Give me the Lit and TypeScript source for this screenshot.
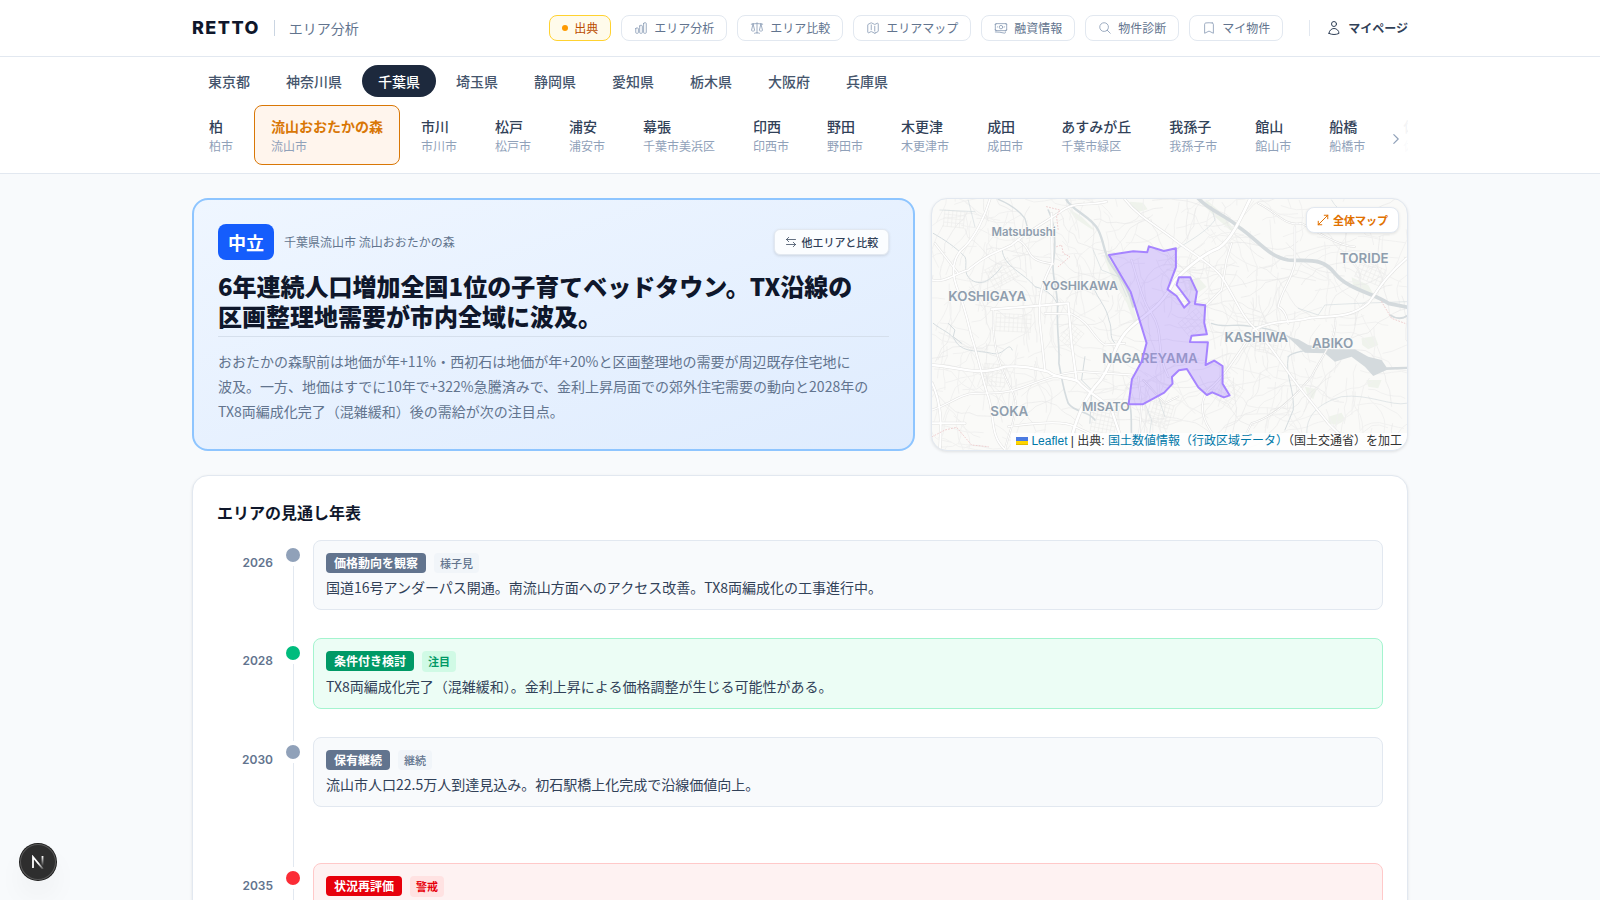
import { LitElement, html, svg, css } from "lit";
import { customElement, state } from "lit/decorators.js";
import { classMap } from "lit/directives/class-map.js";

/* ---------- data ---------- */

const NAV = [
  { label: "エリア分析", icon: "chart" },
  { label: "エリア比較", icon: "scale" },
  { label: "エリアマップ", icon: "map" },
  { label: "融資情報", icon: "banknotes" },
  { label: "物件診断", icon: "search" },
  { label: "マイ物件", icon: "bookmark" },
];

const PREFECTURES = ["東京都", "神奈川県", "千葉県", "埼玉県", "静岡県", "愛知県", "栃木県", "大阪府", "兵庫県"];

const AREAS = [
  ["柏", "柏市"],
  ["流山おおたかの森", "流山市"],
  ["市川", "市川市"],
  ["松戸", "松戸市"],
  ["浦安", "浦安市"],
  ["幕張", "千葉市美浜区"],
  ["印西", "印西市"],
  ["野田", "野田市"],
  ["木更津", "木更津市"],
  ["成田", "成田市"],
  ["あすみが丘", "千葉市緑区"],
  ["我孫子", "我孫子市"],
  ["館山", "館山市"],
  ["船橋", "船橋市"],
  ["佐倉", "佐倉市"],
];

const TIMELINE = [
  { year: "2026", tone: "slate", action: "価格動向を観察", tag: "様子見", text: "国道16号アンダーパス開通。南流山方面へのアクセス改善。TX8両編成化の工事進行中。" },
  { year: "2028", tone: "green", action: "条件付き検討", tag: "注目", text: "TX8両編成化完了（混雑緩和）。金利上昇による価格調整が生じる可能性がある。" },
  { year: "2030", tone: "slate", gap: true, action: "保有継続", tag: "継続", text: "流山市人口22.5万人到達見込み。初石駅橋上化完成で沿線価値向上。" },
  { year: "2035", tone: "red", action: "状況再評価", tag: "警戒", text: "人口ピークアウト後の需給を再確認。" },
];

const ICONS: Record<string, string> = {
  chart:
    "M3 13.125C3 12.504 3.504 12 4.125 12h2.25c.621 0 1.125.504 1.125 1.125v6.75C7.5 20.496 6.996 21 6.375 21h-2.25A1.125 1.125 0 0 1 3 19.875v-6.75ZM9.75 8.625c0-.621.504-1.125 1.125-1.125h2.25c.621 0 1.125.504 1.125 1.125v11.25c0 .621-.504 1.125-1.125 1.125h-2.25a1.125 1.125 0 0 1-1.125-1.125V8.625ZM16.5 4.125c0-.621.504-1.125 1.125-1.125h2.25C20.496 3 21 3.504 21 4.125v15.75c0 .621-.504 1.125-1.125 1.125h-2.25a1.125 1.125 0 0 1-1.125-1.125V4.125Z",
  scale:
    "M12 3v17.25m0 0c-1.472 0-2.882.265-4.185.75M12 20.25c1.472 0 2.882.265 4.185.75M18.75 4.97A48.416 48.416 0 0 0 12 4.5c-2.291 0-4.545.16-6.75.47m13.5 0c1.01.143 2.01.317 3 .52m-3-.52 2.62 10.726c.122.499-.106 1.028-.589 1.202a5.988 5.988 0 0 1-2.031.352 5.988 5.988 0 0 1-2.031-.352c-.483-.174-.711-.703-.59-1.202L18.75 4.971Zm-16.5.52c.99-.203 1.99-.377 3-.52m0 0 2.62 10.726c.122.499-.106 1.028-.589 1.202a5.989 5.989 0 0 1-2.031.352 5.989 5.989 0 0 1-2.031-.352c-.483-.174-.711-.703-.59-1.202L5.25 4.971Z",
  map: "M9 6.75V15m6-6v8.25m.503 3.498 4.875-2.437c.381-.19.622-.58.622-1.006V4.82c0-.836-.88-1.38-1.628-1.006l-3.869 1.934c-.317.159-.69.159-1.006 0L9.503 3.252a1.125 1.125 0 0 0-1.006 0L3.622 5.689C3.24 5.88 3 6.27 3 6.695V19.18c0 .836.88 1.38 1.628 1.006l3.869-1.934c.317-.159.69-.159 1.006 0l4.994 2.497c.317.158.69.158 1.006 0Z",
  banknotes:
    "M2.25 18.75a60.07 60.07 0 0 1 15.797 2.101c.727.198 1.453-.342 1.453-1.096V18.75M3.75 4.5v.75A.75.75 0 0 1 3 6h-.75m0 0v-.375c0-.621.504-1.125 1.125-1.125H20.25M2.25 6v9m18-10.5v.75c0 .414.336.75.75.75h.75m-1.5-1.5h.375c.621 0 1.125.504 1.125 1.125v9.75c0 .621-.504 1.125-1.125 1.125h-.375m1.5-1.5H21a.75.75 0 0 0-.75.75v.75m0 0H3.75m0 0h-.375a1.125 1.125 0 0 1-1.125-1.125V15m1.5 1.5v-.75A.75.75 0 0 0 3 15h-.75M15 10.5a3 3 0 1 1-6 0 3 3 0 0 1 6 0Zm3 0h.008v.008H18V10.5Zm-12 0h.008v.008H6V10.5Z",
  search: "m21 21-5.197-5.197m0 0A7.5 7.5 0 1 0 5.196 5.196a7.5 7.5 0 0 0 10.607 10.607Z",
  bookmark:
    "M17.593 3.322c1.1.128 1.907 1.077 1.907 2.185V21L12 17.25 4.5 21V5.507c0-1.108.806-2.057 1.907-2.185a48.507 48.507 0 0 1 11.186 0Z",
  user: "M15.75 6a3.75 3.75 0 1 1-7.5 0 3.75 3.75 0 0 1 7.5 0ZM4.501 20.118a7.5 7.5 0 0 1 14.998 0A17.933 17.933 0 0 1 12 21.75c-2.676 0-5.216-.584-7.499-1.632Z",
  swap: "M7.5 2.5 3 7l4.5 4.5M3 7h18M16.5 12.5 21 17l-4.5 4.5M21 17H3",
  expand: "M2.5 21.5v-7m0 7h7m-7 0L21.5 2.5m0 0h-7m7 0v7",
  chevron: "m8.25 4.5 7.5 7.5-7.5 7.5",
};

const icon = (name: string, size = 14, weight = 1.5) => html`<svg
  width=${size} height=${size} viewBox="0 0 24 24" fill="none" stroke="currentColor"
  stroke-width=${weight} stroke-linecap="round" stroke-linejoin="round" aria-hidden="true"
><path d=${ICONS[name]}></path></svg>`;

/* ---------- base map ---------- */

const PARKS = [
  "M615 35L655 38 668 58 640 66 618 52Z",
  "M535 195L548 198 600 270 622 340 640 400 628 400 606 340 560 260Z",
  "M430 55L470 80 510 120 500 118 450 85Z",
  "M790 272L820 262 845 290 822 306 795 300Z",
  "M1280 262L1330 285 1350 320 1310 310 1285 290Z",
  "M1310 445L1350 438 1360 465 1330 478 1312 465Z",
  "M1210 680L1250 668 1262 690 1235 705 1212 700Z",
  "M1140 590L1175 598 1165 628 1148 615Z",
  "M1325 570L1370 570 1360 595 1330 590Z",
  "M845 30L880 60 930 120 915 120 870 80 835 45Z",
];

const RIVERS: [string, number][] = [
  ["M425 30C440 60 500 80 520 120C540 160 535 190 560 225C590 270 610 290 625 350", 7],
  ["M220 28C250 40 280 60 300 85L310 120", 4],
  ["M370 60C390 100 395 150 385 220C380 260 400 300 398 360C395 420 405 470 402 520C410 560 415 600 430 640C450 670 490 660 510 690", 5],
  ["M25 130C60 150 90 170 120 200C130 220 110 250 140 270C170 290 200 270 230 230", 3],
  ["M25 400C50 420 80 430 90 450C110 490 160 480 200 490C240 500 250 450 262 480", 3],
  ["M232 180C235 230 300 250 330 290C370 300 390 320 400 350", 3],
  ["M505 180L530 240 580 260 605 320", 2],
  ["M505 290C520 330 545 350 552 390C565 420 550 440 570 460", 3],
  ["M612 640C625 660 615 700 622 775", 5],
  ["M70 400L90 420 85 440 110 460", 3],
  ["M480 500L470 570 500 600 495 700", 3],
  ["M860 400C900 415 930 400 970 408C1020 415 1060 420 1100 445", 4],
  ["M750 180C800 150 850 120 870 90L860 50", 2],
  ["M1090 500C1110 480 1140 490 1160 470", 4],
  ["M1090 500C1080 560 1110 600 1105 660L1080 720", 3],
  ["M1120 355L1180 375 1200 345 1300 340 1445 335", 2],
  ["M1150 760C1130 680 1180 640 1250 620C1330 610 1400 650 1445 640", 2],
  ["M660 640L680 690 670 760M700 620L720 680", 2],
  ["M45 60L150 65M130 30L150 110", 2],
  ["M1220 30C1240 70 1290 80 1330 110", 2],
];

const ROADS: [string, number][] = [
  ["M195 28C180 80 150 140 120 170C80 200 80 250 95 290C120 350 130 400 140 440C160 500 170 560 190 620C210 680 195 740 240 778", 5],
  ["M22 525C100 530 160 560 240 530C310 525 340 540 370 545C400 570 440 560 460 575C490 610 540 630 560 660L600 778", 7],
  ["M430 778C450 700 470 640 510 590C560 540 560 480 600 430C640 380 700 370 750 270C800 220 840 190 880 175C920 150 950 80 975 28", 8],
  ["M22 270C60 280 90 250 130 240C190 190 210 190 260 165C300 130 370 90 400 70C450 30 480 50 545 35", 5],
  ["M380 70L382 220C350 280 340 320 345 400L360 540", 5],
  ["M200 358L430 340 440 460 455 570", 6],
  ["M22 700L120 700M22 580C50 640 50 700 45 778", 6],
  ["M22 660C80 640 110 610 150 610C230 610 260 605 300 590C350 570 420 545 470 545L620 555", 4],
  ["M600 28C640 80 700 110 750 150C800 190 860 220 890 260C930 320 950 380 990 415C1050 480 1080 540 1130 600L1210 700 1290 778", 5],
  ["M985 420C1040 390 1090 400 1150 385C1210 375 1270 390 1330 340C1360 300 1380 260 1445 205", 6],
  ["M920 160L905 210 890 300 840 350", 4],
  ["M1110 110L1110 220C1100 270 1070 300 1060 350C1080 360 1085 380 1090 400", 4],
  ["M990 415C940 490 900 560 850 600C820 640 830 690 870 740", 4],
  ["M1230 385C1240 440 1190 500 1160 560C1110 620 1050 680 980 700L940 778", 3],
  ["M250 710C320 700 420 690 450 710L560 760", 4],
  ["M600 460L540 465C500 440 500 400 440 372L360 370", 4],
  ["M205 360C200 480 230 540 260 600C290 650 260 700 240 778", 3],
  ["M1000 40C1060 70 1080 110 1130 100C1170 120 1240 170 1290 170", 3],
  ["M280 150C330 180 290 210 385 222M100 250L30 160", 4],
  ["M640 560L650 650 640 778M655 570L720 640 760 620", 3],
  ["M680 370C720 430 690 480 730 560M620 210C640 280 660 350 680 370", 4],
];

const DASHED = [
  "M365 50L405 60 395 80 400 120M395 170L410 165 415 190 435 200 400 230",
  "M1370 335L1400 385 1440 400",
  "M22 740L60 720 95 712 140 765 190 770",
];

/** Deterministic pseudo random numbers, so the street web is the same on each render. */
function lcg(seed: number) {
  let s = seed;
  return () => ((s = (s * 1664525 + 1013904223) % 4294967296) / 4294967296);
}

function streets(seed: number, count: number, steps: number): string {
  const rnd = lcg(seed);
  let d = "";
  for (let i = 0; i < count; i++) {
    let x = 20 + rnd() * 1430;
    let y = 25 + rnd() * 760;
    let a = -0.2 + Math.floor(rnd() * 4) * (Math.PI / 2) + rnd() * 0.4;
    d += `M${x.toFixed(0)} ${y.toFixed(0)}`;
    for (let k = 0; k < steps; k++) {
      a += (rnd() - 0.5) * 0.9;
      x += Math.cos(a) * (14 + rnd() * 18);
      y += Math.sin(a) * (14 + rnd() * 18);
      d += `L${x.toFixed(0)} ${y.toFixed(0)}`;
    }
  }
  return d;
}

function blocks(cx: number, cy: number, angle: number, cols: number, rows: number, pitch: number): string {
  const c = Math.cos(angle);
  const s = Math.sin(angle);
  const p = (u: number, v: number) => `${(cx + u * c - v * s).toFixed(0)} ${(cy + u * s + v * c).toFixed(0)}`;
  let d = "";
  for (let i = 0; i <= cols; i++) d += `M${p(i * pitch, 0)}L${p(i * pitch, rows * pitch)}`;
  for (let j = 0; j <= rows; j++) d += `M${p(0, j * pitch)}L${p(cols * pitch, j * pitch)}`;
  return d;
}

const STREETS = streets(7, 330, 6);
const LANES = streets(91, 90, 10);
const BLOCKS = [
  blocks(60, 60, 0.1, 5, 4, 12),
  blocks(180, 240, -0.5, 6, 5, 13),
  blocks(215, 370, 0.05, 8, 4, 13),
  blocks(440, 400, 0.7, 4, 5, 12),
  blocks(180, 520, 0.1, 5, 5, 13),
  blocks(510, 650, 0.2, 6, 6, 12),
  blocks(760, 400, -0.7, 5, 4, 14),
  blocks(900, 560, 0.6, 5, 5, 14),
  blocks(1000, 430, 0.2, 5, 4, 13),
  blocks(1310, 210, 0.4, 6, 4, 13),
  blocks(690, 630, 0.3, 5, 6, 12),
].join("");

const CITY =
  "M552 195L625 184 667 187 672 169 717 183 753 175 753 232 728 298 755 318 778 353 794 337 755 285 762 262 796 262 816 305 810 342 841 346 838 398 846 433 800 437 795 456 849 457 842 525 868 512 893 528 893 581 914 616 897 622 862 607 846 615 820 592 786 537 762 541 741 561 743 581 718 608 653 643 611 643 621 568 650 515 665 459 636 365 617 305Z";

const PLACES: [string, number, number, number][] = [
  ["Matsubushi", 296, 137, 34],
  ["YOSHIKAWA", 465, 300, 37],
  ["KOSHIGAYA", 187, 333, 40],
  ["TORIDE", 1318, 220, 40],
  ["KASHIWA", 994, 455, 40],
  ["ABIKO", 1223, 475, 40],
  ["NAGAREYAMA", 675, 520, 40],
  ["MISATO", 543, 663, 37],
  ["SOKA", 253, 678, 40],
];

@customElement("area-map")
export class AreaMap extends LitElement {
  static styles = css`
    :host {
      display: block;
      position: relative;
      overflow: hidden;
      border: 1px solid #e2e8f0;
      border-radius: 16px;
      background: #fafaf8;
      box-shadow: 0 1px 3px rgb(0 0 0 / 0.1);
      font-family: "Inter", "Noto Sans CJK JP", sans-serif;
    }
    .canvas { position: absolute; inset: 0; width: 100%; height: 100%; display: block; }
    .place { font-family: "Inter", sans-serif; font-weight: 600; fill: #8f9eae; text-anchor: middle;
      stroke: #fafaf8; stroke-width: 5px; paint-order: stroke; stroke-linejoin: round; }
    .full {
      position: absolute; top: 8px; right: 8px;
      display: inline-flex; align-items: center; gap: 4px;
      padding: 4px 10px; border: 1px solid #e2e8f0; border-radius: 8px;
      background: #fff; color: #e17100; text-decoration: none;
      font: 700 11px/16px "Noto Sans CJK JP", sans-serif;
      box-shadow: 0 1px 3px rgb(0 0 0 / 0.1);
    }
    .credit {
      position: absolute; right: 0; bottom: 0; padding: 0 5px;
      background: rgb(255 255 255 / 0.8); color: #333; white-space: nowrap;
      font: 12px/17px "Liberation Sans", "Noto Sans CJK JP", sans-serif;
    }
    .credit a { color: #0078a8; text-decoration: none; }
  `;

  render() {
    return html`
      <svg class="canvas" viewBox="21 27 1425 753" preserveAspectRatio="xMidYMid slice" role="img" aria-label="流山市の地図">
        ${PARKS.map((d) => svg`<path d=${d} fill="#eff3ec"></path>`)}
        <g fill="none" stroke-linecap="round" stroke-linejoin="round">
          <path d=${STREETS} stroke="#f1f1f0" stroke-width="3"></path>
          <path d=${BLOCKS} stroke="#ededec" stroke-width="2"></path>
          <path d=${LANES} stroke="#e9e9e8" stroke-width="2"></path>
          ${RIVERS.map(([d, w]) => svg`<path d=${d} stroke="#d5dcdf" stroke-width=${w}></path>`)}
          <path d="M820 25C850 60 910 80 940 110C1000 150 1030 200 1090 210C1150 215 1190 200 1230 250C1270 300 1350 310 1390 340L1450 352" stroke="#d4dadd" stroke-width="11"></path>
        </g>
        <path d="M1088 440L1120 448 1150 465 1220 478 1290 478 1330 500 1370 510 1385 532 1450 530 1450 537 1385 540 1345 558 1320 530 1280 500 1230 515 1200 490 1140 488Z" fill="#d4dadd"></path>
        <path d="M1395 375C1410 385 1430 390 1450 375" fill="none" stroke="#d4dadd" stroke-width="6"></path>
        <g fill="none" stroke-linecap="round" stroke-linejoin="round">
          ${ROADS.map(([d, w]) => svg`<path d=${d} stroke="#e2e2e1" stroke-width=${w + 3}></path>`)}
          ${ROADS.map(([d, w]) => svg`<path d=${d} stroke="#ffffff" stroke-width=${w}></path>`)}
          ${DASHED.map((d) => svg`<path d=${d} stroke="#efcfd0" stroke-width="3" stroke-dasharray="3 6"></path>`)}
        </g>
        ${PLACES.map(([name, x, y, size]) => svg`<text class="place" x=${x} y=${y} font-size=${size}>${name}</text>`)}
        <path d=${CITY} fill="#a684ff" fill-opacity="0.35" stroke="#a684ff" stroke-width="6" stroke-linejoin="round"></path>
      </svg>
      <a class="full" href="#map">${icon("expand", 12, 2)}全体マップ</a>
      <div class="credit"><a href="#leaflet"><svg width="12" height="8" viewBox="0 0 12 8" aria-hidden="true"><path fill="#4C7BE1" d="M0 0h12v4H0z"></path><path fill="#FFD500" d="M0 4h12v3H0z"></path><path fill="#E0BC00" d="M0 7h12v1H0z"></path></svg> Leaflet</a> | 出典: <a href="#source">国土数値情報（行政区域データ）</a>（国土交通省）を加工</div>
    `;
  }
}

@customElement("area-timeline")
export class AreaTimeline extends LitElement {
  static styles = css`
    :host {
      display: block;
      padding: 24px;
      border: 1px solid #e2e8f0;
      border-radius: 16px;
      background: #fff;
      box-shadow: 0 1px 3px rgb(0 0 0 / 0.1);
    }
    h2 { margin: 0 0 16px; font-size: 16px; line-height: 24px; font-weight: 700; color: #0f172b; }
    ol { list-style: none; margin: 0; padding: 0; }
    .item { display: grid; grid-template-columns: 56px 16px 1fr; column-gap: 12px; }
    .year { padding-top: 15px; text-align: right; font: 600 12px/16px "Inter", sans-serif; color: #62748e; }
    .rail { display: flex; flex-direction: column; align-items: center; gap: 4px; padding-top: 8px; margin-bottom: -4px; }
    .dot { width: 14px; height: 14px; border-radius: 50%; background: #90a1b9; }
    .line { flex: 1; width: 1px; background: #e2e8f0; }
    .body { padding-bottom: 28px; }
    .wide .body { padding-bottom: 56px; }
    .card { padding: 12px; border: 1px solid #e2e8f0; border-radius: 8px; background: #f8fafc; }
    .tags { display: flex; align-items: flex-start; gap: 8px; margin-bottom: 4px; }
    .action { padding: 2px 8px; border-radius: 4px; background: #62748e; color: #fff; font-size: 12px; line-height: 16px; font-weight: 700; }
    .tag { padding: 2px 6px; border-radius: 4px; background: #f1f5f9; color: #62748e; font-size: 11px; line-height: 16px; font-weight: 500; }
    .text { margin: 0; font-size: 14px; line-height: 20px; color: #314158; }
    .green .dot { background: #00bc7d; }
    .green .card { background: #ecfdf5; border-color: #a4f4cf; }
    .green .action { background: #009966; }
    .green .tag { background: #d0fae5; color: #009966; line-height: 17px; font-weight: 700; }
    .red .dot { background: #fb2c36; }
    .red .card { background: #fef2f2; border-color: #ffc9c9; }
    .red .action { background: #e7000b; }
    .red .tag { background: #ffe2e2; color: #e7000b; line-height: 17px; font-weight: 700; }
  `;

  render() {
    return html`
      <h2>エリアの見通し年表</h2>
      <ol>
        ${TIMELINE.map(
          (t) => html`<li class=${classMap({ item: true, [t.tone]: true, wide: !!t.gap })}>
            <div class="year">${t.year}</div>
            <div class="rail"><span class="dot"></span><span class="line"></span></div>
            <div class="body">
              <div class="card">
                <div class="tags"><span class="action">${t.action}</span><span class="tag">${t.tag}</span></div>
                <p class="text">${t.text}</p>
              </div>
            </div>
          </li>`
        )}
      </ol>
    `;
  }
}

@customElement("app-root")
export class AppRoot extends LitElement {
  @state() private prefecture = "千葉県";
  @state() private area = "流山おおたかの森";

  static styles = css`
    :host {
      display: block;
      min-height: 100vh;
      background: #f8fafc;
      color: #0f172b;
      font-family: "Noto Sans CJK JP", sans-serif;
    }
    *, *::before, *::after { box-sizing: border-box; }
    button { font: inherit; cursor: pointer; }
    a { text-decoration: none; }
    .wrap { max-width: 1280px; margin: 0 auto; padding: 0 32px; }
    .top { background: #fff; border-bottom: 1px solid #e2e8f0; }
    .bar { display: flex; align-items: center; justify-content: space-between; height: 56px; }
    .brand { display: flex; align-items: center; gap: 14px; }
    .logo { font: 800 18px/28px "Inter", sans-serif; letter-spacing: 0.08em; color: #0f172b; }
    .rule { width: 1px; height: 16px; background: #cad5e2; }
    .crumb { font-size: 14px; line-height: 20px; color: #62748e; }
    .nav { display: flex; align-items: center; gap: 10px; }
    .chip {
      display: inline-flex; align-items: center; gap: 6px;
      padding: 4px 12px; border: 1px solid #e2e8f0; border-radius: 8px;
      background: #fff; color: #62748e; font-size: 12px; line-height: 16px;
    }
    .chip svg { color: #90a1b9; }
    .chip.source { background: #fffbeb; border-color: #ffd230; color: #bb4d00; }
    .bullet { width: 6px; height: 6px; border-radius: 50%; background: #fe9a00; }
    .me {
      display: inline-flex; align-items: center; gap: 6px; margin-left: 6px;
      color: #314158; font-size: 12px; line-height: 16px; font-weight: 700;
    }
    .split { width: 1px; height: 16px; margin-left: 16px; background: #e2e8f0; }
    .picker { background: #fff; border-bottom: 1px solid #e2e8f0; padding-top: 8px; }
    .prefs { display: flex; gap: 4px; margin-bottom: 8px; }
    .pref {
      padding: 6px 16px; border: 0; border-radius: 16px; background: none;
      color: #45556c; font-size: 14px; line-height: 20px; font-weight: 500; white-space: nowrap;
    }
    .pref.on { background: #1d293d; color: #fff; }
    .strip { position: relative; }
    .areas { display: flex; gap: 4px; padding-bottom: 8px; overflow: hidden; }
    .area {
      flex: none; display: flex; flex-direction: column; gap: 2px; text-align: left;
      padding: 10px 16px; border: 1px solid transparent; border-radius: 8px; background: none;
    }
    .name { color: #314158; font-size: 14px; line-height: 20px; font-weight: 500; }
    .city { color: #90a1b9; font-size: 12px; line-height: 16px; }
    .area.on { border-color: #d97706; background: #fff5ed; }
    .area.on .name { color: #d97706; font-weight: 700; }
    .next {
      position: absolute; top: 0; right: 0; bottom: 0; width: 38px;
      display: flex; align-items: center; justify-content: flex-end;
      padding: 0 5px; border: 0; background: rgb(255 255 255 / 0.94); color: #90a1b9;
    }
    .page { padding-top: 24px; padding-bottom: 48px; display: grid; gap: 24px; }
    .lead { display: grid; grid-template-columns: repeat(5, 1fr); gap: 16px; }
    .hero {
      grid-column: span 3; padding: 24px; border: 2px solid #8ec5ff; border-radius: 16px;
      background: linear-gradient(to bottom right, #eff6ff, #dfecfe);
    }
    .lead area-map { grid-column: span 2; min-height: 253px; }
    .head { display: flex; align-items: center; gap: 10px; margin-bottom: 11px; }
    .stance { padding: 5px 10px; border-radius: 8px; background: #155dfc; color: #fff; font-size: 18px; line-height: 26px; font-weight: 700; }
    .where { flex: 1; color: #62748e; font-size: 12px; line-height: 16px; }
    .compare {
      display: inline-flex; align-items: center; gap: 4px;
      padding: 4px 10px; border: 1px solid #e2e8f0; border-radius: 6px;
      background: #fbfdff; color: #314158; font-size: 11px; line-height: 16px; font-weight: 500;
      box-shadow: 0 1px 3px rgb(0 0 0 / 0.12);
    }
    h1 { margin: 0 0 5px; font-size: 24px; line-height: 30px; font-weight: 900; color: #0f172b; }
    .summary { margin: 0; padding-top: 12px; border-top: 1px solid #d5dfec; color: #62748e; font-size: 14px; line-height: 25px; }
    .dev {
      position: fixed; left: 20px; bottom: 20px; width: 36px; height: 36px; padding: 0;
      display: grid; place-items: center; border: 0; border-radius: 50%;
      background: #2e2e2e; color: #fff;
      box-shadow: 0 0 0 1px #1a1a1a, inset 0 0 0 1px #585858, 0 16px 32px -8px rgb(0 0 0 / 0.14);
    }
  `;

  render() {
    return html`
      <header class="top">
        <div class="wrap bar">
          <div class="brand">
            <span class="logo">RETTO</span>
            <span class="rule"></span>
            <span class="crumb">エリア分析</span>
          </div>
          <nav class="nav">
            <a class="chip source" href="#source"><span class="bullet"></span>出典</a>
            ${NAV.map((n) => html`<a class="chip" href="#${n.icon}">${icon(n.icon)}${n.label}</a>`)}
            <span class="split"></span>
            <a class="me" href="#me">${icon("user", 16, 1.5)}マイページ</a>
          </nav>
        </div>
      </header>

      <section class="picker">
        <div class="wrap">
          <div class="prefs">
            ${PREFECTURES.map(
              (p) => html`<button class=${classMap({ pref: true, on: p === this.prefecture })} @click=${() => (this.prefecture = p)}>${p}</button>`
            )}
          </div>
          <div class="strip">
            <div class="areas">
              ${AREAS.map(
                ([name, city]) => html`<button class=${classMap({ area: true, on: name === this.area })} @click=${() => (this.area = name)}>
                  <span class="name">${name}</span><span class="city">${city}</span>
                </button>`
              )}
            </div>
            <button class="next" aria-label="次へ">${icon("chevron", 14, 2)}</button>
          </div>
        </div>
      </section>

      <main class="wrap page">
        <div class="lead">
          <article class="hero">
            <div class="head">
              <span class="stance">中立</span>
              <span class="where">千葉県流山市 流山おおたかの森</span>
              <button class="compare">${icon("swap", 12, 1.5)}他エリアと比較</button>
            </div>
            <h1>6年連続人口増加全国1位の子育てベッドタウン。TX沿線の<br />区画整理地需要が市内全域に波及。</h1>
            <p class="summary">
              おおたかの森駅前は地価が年+11%・西初石は地価が年+20%と区画整理地の需要が周辺既存住宅地に<br />波及。一方、地価はすでに10年で+322%急騰済みで、金利上昇局面での郊外住宅需要の動向と2028年の<br />TX8両編成化完了（混雑緩和）後の需給が次の注目点。
            </p>
          </article>
          <area-map></area-map>
        </div>
        <area-timeline></area-timeline>
      </main>

      <button class="dev" aria-label="Next.js">
        <svg width="14" height="14" viewBox="0 0 14 14" fill="none" aria-hidden="true">
          <defs>
            <linearGradient id="fade-a" x1="8" y1="8" x2="13" y2="15" gradientUnits="userSpaceOnUse">
              <stop stop-color="#fff"></stop><stop offset="1" stop-color="#fff" stop-opacity="0"></stop>
            </linearGradient>
            <linearGradient id="fade-b" x1="11" y1="1" x2="11" y2="11" gradientUnits="userSpaceOnUse">
              <stop stop-color="#fff"></stop><stop offset="1" stop-color="#fff" stop-opacity="0"></stop>
            </linearGradient>
          </defs>
          <path d="M2 13V2L12 14" stroke="url(#fade-a)" stroke-width="1.8"></path>
          <path d="M11.5 1V11" stroke="url(#fade-b)" stroke-width="1.8"></path>
        </svg>
      </button>
    `;
  }
}
